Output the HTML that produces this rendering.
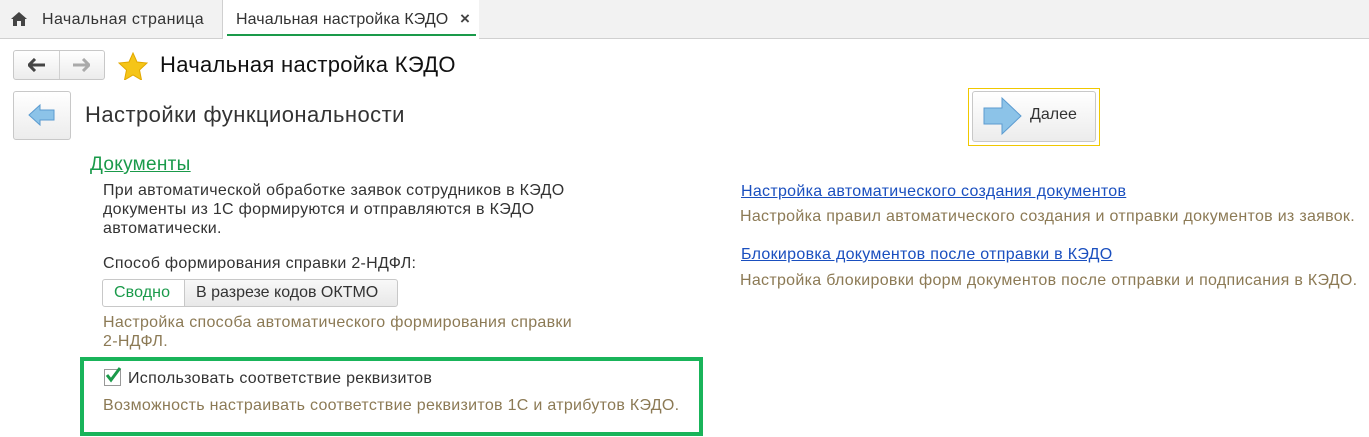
<!DOCTYPE html>
<html><head><meta charset="utf-8"><style>
body{margin:0;width:1369px;height:437px;background:#fff;font-family:"Liberation Sans",Arial,sans-serif;position:relative;overflow:hidden;color:#333}
.a{position:absolute;white-space:nowrap}
.t{font-size:16px;line-height:19px;letter-spacing:0.3px}
.g{color:#8c7a55}
.lnk{color:#1a4fbf;text-decoration:underline}
</style></head><body>
<div class="a" style="left:0;top:0;width:1369px;height:38px;background:#f2f2f2;border-bottom:1px solid #d0d0d0"></div>
<div class="a" style="left:222px;top:0;width:1px;height:38px;background:#d0d0d0"></div>
<div class="a" style="left:223px;top:0;width:256px;height:39px;background:#fff"></div>
<div class="a" style="left:227px;top:34px;width:249px;height:2px;background:#1a9a4a"></div>
<svg class="a" style="left:10px;top:11px" width="18" height="16" viewBox="0 0 18 16"><path d="M9 1L1 8h2v7h4v-5h4v5h4V8h2z" fill="#444"/></svg>
<div class="a t" style="left:42px;top:10px;color:#333;letter-spacing:0.4px">Начальная страница</div>
<div class="a t" style="left:236px;top:10px;color:#333;letter-spacing:0.1px">Начальная настройка КЭДО</div>
<div class="a" style="left:460px;top:9px;font-size:17px;color:#444;font-weight:bold">×</div>
<div class="a" style="left:13px;top:50px;width:90px;height:28px;border:1px solid #c8c8c8;border-radius:3px;background:linear-gradient(#fff,#ececec)"></div>
<div class="a" style="left:59px;top:51px;width:1px;height:28px;background:#d0d0d0"></div>
<svg class="a" style="left:28px;top:58px" width="18" height="14"><path d="M1 7h16M7 1L1 7l6 6" stroke="#444" stroke-width="3" fill="none"/></svg>
<svg class="a" style="left:72px;top:58px" width="18" height="14"><path d="M1 7h16M11 1l6 6-6 6" stroke="#aaa" stroke-width="3" fill="none"/></svg>
<svg class="a" style="left:118px;top:52px" width="30" height="28" viewBox="0 0 30 28"><path d="M15 1l4 9 10 1-7.5 7 2 10L15 23l-8.5 5 2-10L1 11l10-1z" fill="#f5c518" stroke="#e2a800" stroke-width="1"/></svg>
<div class="a" style="left:160px;top:52px;font-size:22px;letter-spacing:0.3px;color:#111">Начальная настройка КЭДО</div>
<div class="a" style="left:13px;top:91px;width:56px;height:47px;border:1px solid #c8c8c8;border-radius:3px;background:linear-gradient(#fff,#ececec)"></div>
<svg class="a" style="left:28px;top:104px" width="28" height="22" viewBox="0 0 28 22"><path d="M1 11L12 1v5h14v10H12v5z" fill="#8cc3e8" stroke="#5b9bd0"/></svg>
<div class="a" style="left:85px;top:102px;font-size:22px;letter-spacing:0.45px;color:#333">Настройки функциональности</div>
<div class="a" style="left:968px;top:88px;width:130px;height:56px;border:1px solid #f0c800"></div>
<div class="a" style="left:972px;top:91px;width:122px;height:49px;border:1px solid #c8c8c8;border-radius:3px;background:linear-gradient(#fff,#ececec)"></div>
<svg class="a" style="left:983px;top:96px" width="40" height="40" viewBox="0 0 40 40"><path d="M1 12h18V2l19 18-19 18V28H1z" fill="#8cc3e8" stroke="#5b9bd0"/></svg>
<div class="a" style="left:1030px;top:106px;font-size:16px;color:#333">Далее</div>
<div class="a" style="left:90px;top:154px;font-size:19px;letter-spacing:0.3px;color:#1a9a4a;text-decoration:underline">Документы</div>
<div class="a t" style="left:103px;top:181px;color:#333">При автоматической обработке заявок сотрудников в КЭДО<br>документы из 1С формируются и отправляются в КЭДО<br>автоматически.</div>
<div class="a t" style="left:103px;top:254px;color:#333">Способ формирования справки 2-НДФЛ:</div>
<div class="a" style="left:102px;top:279px;width:82px;height:26px;border:1px solid #c8c8c8;border-radius:3px 0 0 3px;background:#fff"></div>
<div class="a" style="left:184px;top:279px;width:212px;height:26px;border:1px solid #c8c8c8;border-radius:0 3px 3px 0;background:linear-gradient(#f8f8f8,#e8e8e8)"></div>
<div class="a t" style="left:114px;top:283px;color:#1a9a4a;letter-spacing:0.1px">Сводно</div>
<div class="a t" style="left:196px;top:283px;color:#333;letter-spacing:0">В разрезе кодов ОКТМО</div>
<div class="a t g" style="left:103px;top:313px">Настройка способа автоматического формирования справки<br>2-НДФЛ.</div>
<div class="a" style="left:80px;top:357px;width:615px;height:71px;border:4px solid #19b45a"></div>
<div class="a" style="left:104px;top:369px;width:15px;height:15px;border:1px solid #999;background:#fff"></div>
<svg class="a" style="left:104px;top:366px" width="20" height="18"><path d="M3 9l4 5 9-12" stroke="#1a9a4a" stroke-width="3" fill="none"/></svg>
<div class="a t" style="left:128px;top:369px;color:#333">Использовать соответствие реквизитов</div>
<div class="a t g" style="left:103px;top:396px">Возможность настраивать соответствие реквизитов 1С и атрибутов КЭДО.</div>
<div class="a t lnk" style="left:741px;top:182px">Настройка автоматического создания документов</div>
<div class="a t g" style="left:740px;top:207px">Настройка правил автоматического создания и отправки документов из заявок.</div>
<div class="a t lnk" style="left:741px;top:245px">Блокировка документов после отправки в КЭДО</div>
<div class="a t g" style="left:740px;top:271px">Настройка блокировки форм документов после отправки и подписания в КЭДО.</div>
</body></html>
